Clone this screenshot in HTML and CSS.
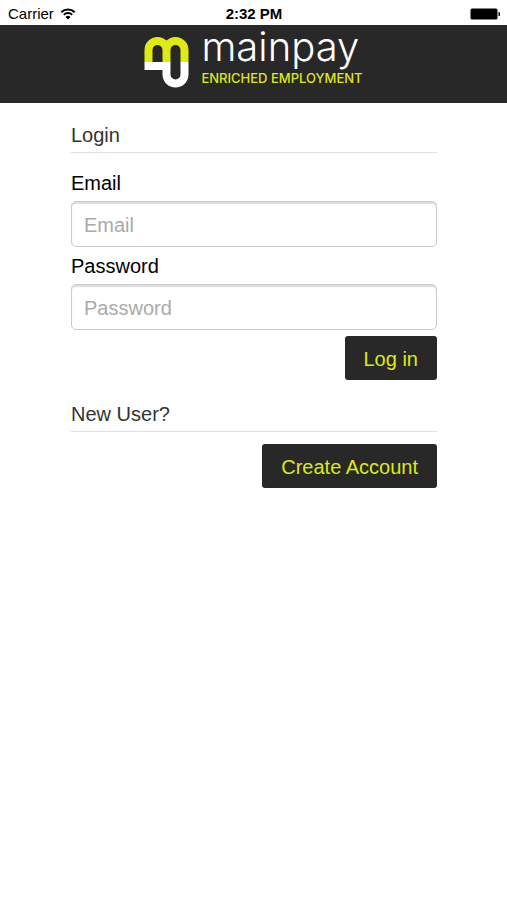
FILE: index.html
```html
<!DOCTYPE html>
<html lang="en">
<head>
<meta charset="utf-8">
<meta name="viewport" content="width=device-width, initial-scale=1">
<title>mainpay</title>
<link rel="stylesheet" href="styles.css">
</head>
<body>
<div class="status">
  <div class="carrier">
    <span>Carrier</span>
    <svg width="16" height="12" viewBox="0 0 16 12" aria-hidden="true">
      <path d="M1.3 4.2a9.6 9.6 0 0 1 13.4 0M3.8 6.8a6 6 0 0 1 8.4 0" fill="none" stroke="#000" stroke-width="2"/>
      <path d="M8 11.6 5.5 9a3.6 3.6 0 0 1 5 0z"/>
    </svg>
  </div>
  <div class="clock">2:32 PM</div>
  <svg class="battery" width="30" height="12" viewBox="0 0 30 12" aria-hidden="true">
    <rect x="0.5" y="0.5" width="27" height="11" rx="1.5"/>
    <path d="M28.5 4a2 2 0 0 1 0 4z"/>
  </svg>
</div>
<header class="banner">
  <svg class="mark" width="45" height="52" viewBox="0 0 45 52" fill="none" stroke-width="8" aria-hidden="true">
    <path d="M4.5 26V14a9 9 0 0 1 18 0V26M22.5 26V14a9 9 0 0 1 18 0V26" stroke="#dfe914"/>
    <path d="M40.5 26V38.5a9 9 0 0 1-18 0V30H.5M22.5 26V31" stroke="#fff"/>
  </svg>
  <div class="brand">
    <div class="name">mainpay</div>
    <div class="tagline">ENRICHED EMPLOYMENT</div>
  </div>
</header>
<main class="content">
  <form class="login">
    <h1 class="heading">Login</h1>
    <div class="fields">
      <label for="email">Email</label>
      <input id="email" type="email" placeholder="Email">
      <label for="password">Password</label>
      <input id="password" type="password" placeholder="Password">
      <button class="button" type="submit">Log in</button>
    </div>
  </form>
  <section class="signup">
    <h2 class="heading">New User?</h2>
    <button class="button" type="button">Create Account</button>
  </section>
</main>
</body>
</html>
```
FILE: styles.css
```css
* { box-sizing: border-box; }
body {
  margin: 0;
  background: #fff;
  color: #000;
  font: 20px/24px "Liberation Sans", Arial, sans-serif;
}
.status {
  display: grid;
  grid-template-columns: 1fr auto 1fr;
  align-items: center;
  height: 25px;
  padding: 2px 7px 0 8px;
  font-size: 15px;
  line-height: 20px;
}
.carrier { display: flex; align-items: center; gap: 6px; }
.clock { font-weight: bold; }
.battery { justify-self: end; }
.banner {
  display: flex;
  justify-content: center;
  gap: 12px;
  height: 78px;
  padding-top: 11px;
  background: #282828;
}
.brand { font-family: Inter, sans-serif; }
.name {
  color: #fff;
  font-size: 40px;
  font-weight: 300;
  line-height: 22px;
}
.tagline {
  margin-top: 12px;
  color: #dfe914;
  font-size: 13px;
  font-weight: 500;
  line-height: 16px;
}
.content { padding: 20px 70px 20px 71px; }
.heading {
  margin: 0;
  padding-bottom: 5px;
  border-bottom: 1px solid #e0e0e0;
  color: #333;
  font-size: 20px;
  font-weight: normal;
}
.fields {
  display: flex;
  flex-direction: column;
  gap: 6px;
  margin-top: 17px;
}
label {
  padding-top: 1px;
  line-height: 24px;
}
input {
  width: 100%;
  height: 46px;
  padding: 2px 12px 0;
  border: 1px solid #ccc;
  border-radius: 5px;
  background: #fff;
  box-shadow: inset 0 2px 1px #ddd;
  color: #333;
  font: inherit;
}
input::placeholder { color: #aaa; opacity: 1; }
.button {
  align-self: flex-end;
  height: 44px;
  padding: 2px 19px 0;
  border: 0;
  border-radius: 3px;
  background: #282828;
  color: #dfe914;
  font: inherit;
}
.signup {
  display: flex;
  flex-direction: column;
  gap: 12px;
  margin-top: 22px;
}
```
